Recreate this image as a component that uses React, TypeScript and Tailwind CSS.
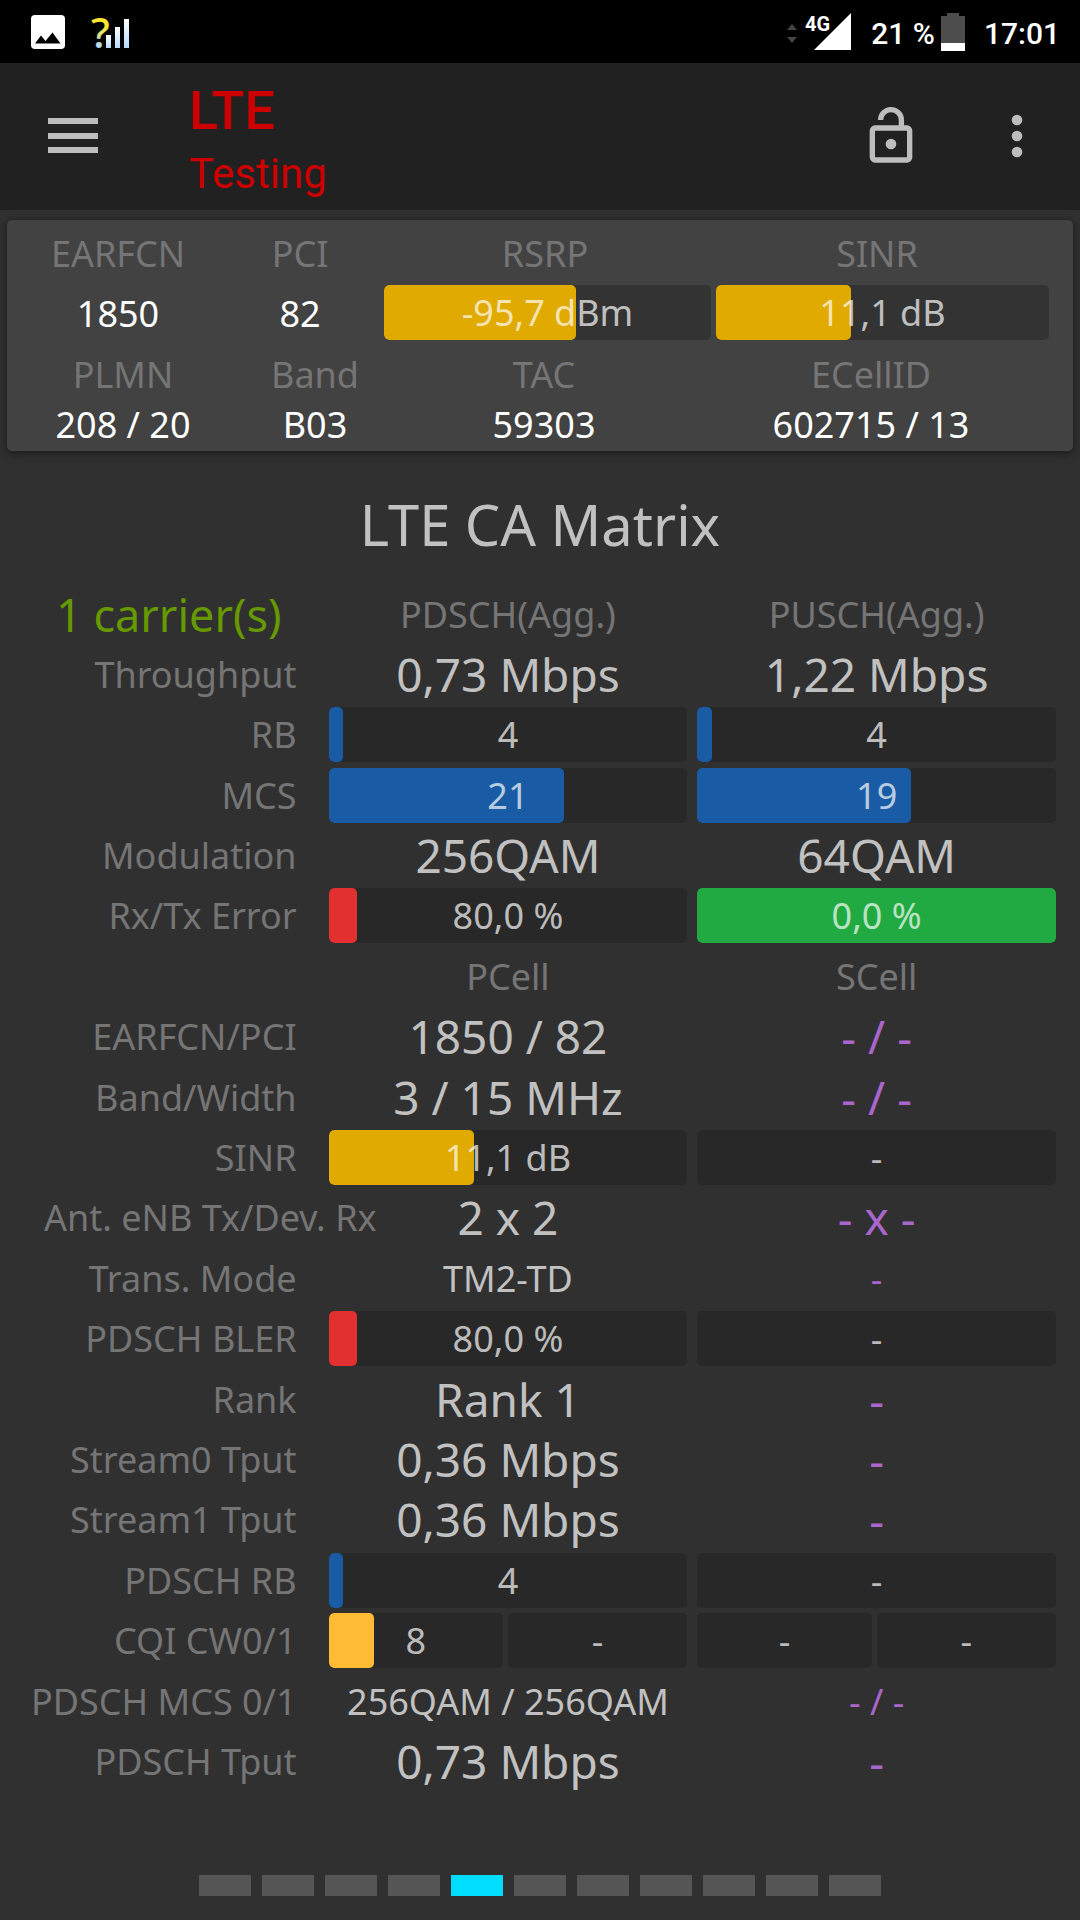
import React from 'react'
import clsx from 'clsx'

type Tone = 'blue' | 'red' | 'green' | 'amber' | 'orange'

interface BarData {
  text: string
  percent?: number
  tone?: Tone
}

interface TextData {
  text: string
  small?: boolean
  muted?: boolean
  empty?: boolean
}

type Cell = { bars: BarData[] } | TextData

interface MatrixRow {
  label: string
  cells: [Cell, Cell]
}

const TONES: Record<Tone, string> = {
  blue: 'bg-[#195ca5]',
  red: 'bg-[#e23030]',
  green: 'bg-[#22aa42]',
  amber: 'bg-[#e0aa00]',
  orange: 'bg-[#ffbb33]',
}

const bar = (text: string, percent?: number, tone?: Tone): Cell => ({
  bars: [{ text, percent, tone }],
})

const none = (text = '-', small = false): Cell => ({ text, small, empty: true })

const rows: MatrixRow[] = [
  { label: 'Throughput', cells: [{ text: '0,73 Mbps' }, { text: '1,22 Mbps' }] },
  { label: 'RB', cells: [bar('4', 4, 'blue'), bar('4', 4, 'blue')] },
  { label: 'MCS', cells: [bar('21', 65.5, 'blue'), bar('19', 59.5, 'blue')] },
  { label: 'Modulation', cells: [{ text: '256QAM' }, { text: '64QAM' }] },
  { label: 'Rx/Tx Error', cells: [bar('80,0 %', 8, 'red'), bar('0,0 %', 100, 'green')] },
  { label: '', cells: [{ text: 'PCell', muted: true }, { text: 'SCell', muted: true }] },
  { label: 'EARFCN/PCI', cells: [{ text: '1850 / 82' }, none('- / -')] },
  { label: 'Band/Width', cells: [{ text: '3 / 15 MHz' }, none('- / -')] },
  { label: 'SINR', cells: [bar('11,1 dB', 40.4, 'amber'), bar('-')] },
  { label: 'Ant. eNB Tx/Dev. Rx', cells: [{ text: '2 x 2' }, none('- x -')] },
  { label: 'Trans. Mode', cells: [{ text: 'TM2-TD', small: true }, none('-', true)] },
  { label: 'PDSCH BLER', cells: [bar('80,0 %', 8, 'red'), bar('-')] },
  { label: 'Rank', cells: [{ text: 'Rank 1' }, none()] },
  { label: 'Stream0 Tput', cells: [{ text: '0,36 Mbps' }, none()] },
  { label: 'Stream1 Tput', cells: [{ text: '0,36 Mbps' }, none()] },
  { label: 'PDSCH RB', cells: [bar('4', 4, 'blue'), bar('-')] },
  {
    label: 'CQI CW0/1',
    cells: [
      { bars: [{ text: '8', percent: 26, tone: 'orange' }, { text: '-' }] },
      { bars: [{ text: '-' }, { text: '-' }] },
    ],
  },
  {
    label: 'PDSCH MCS 0/1',
    cells: [{ text: '256QAM / 256QAM', small: true }, none('- / -', true)],
  },
  { label: 'PDSCH Tput', cells: [{ text: '0,73 Mbps' }, none()] },
]

const PAGE_COUNT = 11
const ACTIVE_PAGE = 4

function Bar({ text, percent = 0, tone, className }: BarData & { className: string }) {
  return (
    <div className={clsx('relative h-[55px] overflow-hidden rounded-[5px]', className)}>
      {tone && (
        <div
          className={clsx('absolute inset-y-0 left-0 rounded-[5px]', TONES[tone])}
          style={{ width: `${percent}%` }}
        />
      )}
      <span className="relative block text-center text-[36px] leading-[56px] text-white/70">
        {text}
      </span>
    </div>
  )
}

function MatrixCell({ cell }: { cell: Cell }) {
  if ('bars' in cell) {
    return (
      <td className="px-[5px] py-0">
        <div
          className={clsx('grid gap-[5px]', cell.bars.length > 1 && 'grid-cols-[174fr_179fr]')}
        >
          {cell.bars.map((item, i) => (
            <Bar key={i} {...item} className="bg-[#282828]" />
          ))}
        </div>
      </td>
    )
  }
  return (
    <td
      className={clsx(
        'p-0 text-center leading-[55px]',
        cell.small || cell.muted ? 'text-[36px]' : 'text-[46px]',
        cell.empty ? 'text-[#aa66cc]' : cell.muted ? 'text-[#757575]' : 'text-[#c1c1c1]',
      )}
    >
      {cell.text}
    </td>
  )
}

function StatusBar() {
  return (
    <div className="flex h-[63px] items-center justify-between bg-black pl-[30px] pr-[20px] font-['Roboto',sans-serif] text-[30px] font-medium text-white">
      <div className="flex items-center gap-[26px]">
        <svg width="36" height="36" viewBox="0 0 36 36" aria-hidden="true">
          <rect x="1" y="1" width="34" height="34" rx="4" fill="#fff" />
          <path d="M5 29.500L11 21.500L15.500 27L22.500 18.500L30.500 29.500Z" fill="#000" />
        </svg>
        <svg className="overflow-visible" width="40" height="36" viewBox="0 0 40 36" aria-hidden="true">
          <defs>
            <linearGradient id="mark" x1="0" y1="0" x2="0" y2="1">
              <stop offset="0.4" stopColor="#fde62e" />
              <stop offset="0.75" stopColor="#b5d9f5" />
            </linearGradient>
            <linearGradient id="bars" x1="0" y1="0" x2="0" y2="1">
              <stop offset="0" stopColor="#fff" />
              <stop offset="1" stopColor="#b5dbff" />
            </linearGradient>
          </defs>
          <text x="-1" y="34" fill="url(#mark)" className="font-['Noto_Sans'] text-[42px] font-medium">
            ?
          </text>
          <rect x="14" y="21" width="5" height="13" fill="url(#bars)" />
          <rect x="23" y="13" width="5" height="21" fill="url(#bars)" />
          <rect x="32" y="5" width="5" height="29" fill="url(#bars)" />
        </svg>
      </div>
      <div className="flex items-center">
        <svg width="64" height="38" viewBox="0 0 64 38" aria-hidden="true">
          <path d="M0 17L5 11L10 17ZM0 24H10L5 30Z" fill="#444" />
          <path d="M27 37L64 0V37Z" fill="#fff" />
          <text x="18" y="18" fill="#fff" className="text-[20px] font-bold">
            4G
          </text>
        </svg>
        <span className="ml-[20px] pt-[3px]">21 %</span>
        <svg className="ml-[6px]" width="24" height="38" viewBox="0 0 24 38" aria-hidden="true">
          <path d="M6 0H18V3H24V31H0V3H6Z" fill="#4d4d4d" />
          <path d="M0 30H24V38H0Z" fill="#fff" />
        </svg>
        <span className="ml-[19px] pt-[3px]">17:01</span>
      </div>
    </div>
  )
}

function AppBar() {
  return (
    <header className="flex h-[147px] items-center bg-[#212121] pb-[2px] pl-[40px] pr-[31px] font-['Roboto',sans-serif] text-[#cc0000]">
      <button type="button" aria-label="Menu" className="text-[#bdbdbd]">
        <svg width="66" height="66" viewBox="0 0 66 66" fill="currentColor">
          <path d="M8 15H58V21H8ZM8 30H58V36H8ZM8 44H58V50H8Z" />
        </svg>
      </button>
      <div className="ml-[83px] flex-1 pt-[8px]">
        <h1 className="text-[54px] font-medium leading-[68px]">LTE</h1>
        <p className="text-[42px] leading-[58px]">Testing</p>
      </div>
      <button type="button" aria-label="Unlock" className="mr-[62px] text-[#bdbdbd]">
        <svg width="64" height="64" viewBox="0 0 24 24" fill="none" stroke="currentColor" strokeWidth="2">
          <rect x="5" y="9" width="14" height="12" rx="1" />
          <path d="M8.100 6a3.900 3.900 0 0 1 7.800 0V9" />
          <circle cx="12" cy="15" r="2" fill="currentColor" stroke="none" />
        </svg>
      </button>
      <button type="button" aria-label="More options" className="text-[#bdbdbd]">
        <svg width="64" height="64" viewBox="0 0 24 24" fill="currentColor">
          <circle cx="12" cy="6" r="2" />
          <circle cx="12" cy="12" r="2" />
          <circle cx="12" cy="18" r="2" />
        </svg>
      </button>
    </header>
  )
}

function CellSummary() {
  return (
    <section className="mx-[7px] mt-[10px] rounded-[5px] bg-[#424242] pb-[10px] text-center text-[36px] text-white shadow-[0_2px_8px_rgba(0,0,0,0.5)]">
      <div className="grid h-[65px] grid-cols-[196fr_168fr_322fr_342fr] pl-[13px] pr-[25px] leading-[67px] text-[#757575]">
        <div>EARFCN</div>
        <div>PCI</div>
        <div>RSRP</div>
        <div>SINR</div>
      </div>
      <div className="grid grid-cols-[196fr_158fr_327fr_333fr] gap-x-[5px] pl-[13px] pr-[24px] leading-[57px]">
        <div>1850</div>
        <div>82</div>
        <Bar text="-95,7 dBm" percent={58.7} tone="amber" className="bg-[#333333]" />
        <Bar text="11,1 dB" percent={40.4} tone="amber" className="bg-[#333333]" />
      </div>
      <div className="grid grid-cols-[206fr_178fr_280fr_374fr] pl-[13px] pr-[15px]">
        <div className="leading-[66px] text-[#757575]">PLMN</div>
        <div className="leading-[66px] text-[#757575]">Band</div>
        <div className="leading-[66px] text-[#757575]">TAC</div>
        <div className="leading-[66px] text-[#757575]">ECellID</div>
        <div className="leading-[33px]">208 / 20</div>
        <div className="leading-[33px]">B03</div>
        <div className="leading-[33px]">59303</div>
        <div className="leading-[33px]">602715 / 13</div>
      </div>
    </section>
  )
}

function CaMatrix() {
  return (
    <section className="pr-[19px]">
      <h2 className="pb-[20px] pl-[19px] pt-[33px] text-center text-[56px] leading-[80px] text-[#c1c1c1]">
        LTE CA Matrix
      </h2>
      <table className="h-[1208px] w-full table-fixed border-collapse whitespace-nowrap">
        <colgroup>
          <col className="w-[30.5%]" />
          <col />
          <col />
        </colgroup>
        <thead>
          <tr className="h-[60px]">
            <th className="py-0 pl-0 pr-[42px] text-right text-[45px] font-normal leading-[55px] text-[#669900]">
              1 carrier(s)
            </th>
            <th className="p-0 text-[36px] font-normal leading-[55px] text-[#757575]">PDSCH(Agg.)</th>
            <th className="p-0 text-[36px] font-normal leading-[55px] text-[#757575]">PUSCH(Agg.)</th>
          </tr>
        </thead>
        <tbody>
          {rows.map(({ label, cells }, i) => (
            <tr key={i} className="h-[60px]">
              <th
                scope="row"
                className={clsx(
                  'py-0 text-[36px] font-normal leading-[55px] text-[#757575]',
                  // too long for its column, so it runs over to the right
                  label.startsWith('Ant.') ? 'pl-[44px] text-left' : 'pr-[27px] text-right',
                )}
              >
                {label}
              </th>
              <MatrixCell cell={cells[0]} />
              <MatrixCell cell={cells[1]} />
            </tr>
          ))}
        </tbody>
      </table>
    </section>
  )
}

export default function App() {
  return (
    <div className="flex min-h-screen flex-col bg-[#303030] font-['Noto_Sans','Open_Sans',sans-serif]">
      <StatusBar />
      <AppBar />
      <main className="flex-1">
        <CellSummary />
        <CaMatrix />
      </main>
      <nav aria-label="Pages" className="flex justify-center gap-[11px] pb-[24px]">
        {Array.from({ length: PAGE_COUNT }, (_, i) => (
          <button
            key={i}
            type="button"
            aria-label={`Page ${i + 1}`}
            className={clsx('h-[21px] w-[52px]', i === ACTIVE_PAGE ? 'bg-[#00ddff]' : 'bg-[#555555]')}
          />
        ))}
      </nav>
    </div>
  )
}
